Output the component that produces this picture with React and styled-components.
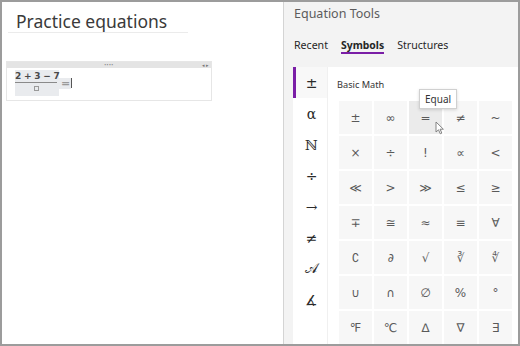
import React from 'react';
import styled, { createGlobalStyle } from 'styled-components';

const GlobalStyle = createGlobalStyle`
  html, body {
    margin: 0;
    padding: 0;
    background: #ffffff;
  }
  * {
    box-sizing: border-box;
  }
`;

const Frame = styled.div`
  width: 520px;
  height: 346px;
  border: 2px solid #9c9c9c;
  display: flex;
  overflow: hidden;
  font-family: 'Noto Sans', 'Open Sans', sans-serif;
`;

const Page = styled.div`
  width: 281px;
  background: #ffffff;
  padding-top: 8px;
`;

const PageTitle = styled.div`
  margin-left: 6px;
  width: 180px;
  padding-left: 8px;
  height: 23px;
  border-bottom: 1px solid #ebebeb;
  font-size: 17.5px;
  line-height: 22px;
  color: #3a3a3a;
`;

const EquationBox = styled.div`
  margin: 28px 0 0 4px;
  width: 206px;
  height: 40px;
  border: 1px solid #e6e6e6;
`;

const HandleBar = styled.div`
  height: 6px;
  background: #e4e4e4;
  position: relative;
  display: flex;
  justify-content: center;
  align-items: center;
  font-size: 5px;
  line-height: 6px;
  color: #888888;
  letter-spacing: 0.5px;
`;

const HandleArrows = styled.span`
  position: absolute;
  right: 2px;
  top: 0;
  font-size: 5px;
  color: #777777;
`;

const EquationLine = styled.div`
  display: flex;
  align-items: center;
  padding: 2px 0 0 8px;
`;

const Fraction = styled.div`
  display: flex;
  flex-direction: column;
  align-items: stretch;
  background: #e9ebee;
  padding: 1px 2px 2px 0;
  width: 44px;
`;

const Numerator = styled.div`
  font-family: 'DejaVu Sans', sans-serif;
  font-size: 9px;
  font-weight: bold;
  color: #4a4a4a;
  line-height: 10px;
  padding-bottom: 1px;
  border-bottom: 1px solid #8a8a8a;
  white-space: nowrap;
  letter-spacing: -0.2px;
`;

const Denominator = styled.div`
  display: flex;
  justify-content: center;
  padding-top: 2px;
  height: 11px;
`;

const Placeholder = styled.span`
  width: 5px;
  height: 5px;
  border: 1px solid #9a9a9a;
  margin-top: 1px;
`;

const EqualSign = styled.span`
  font-family: 'DejaVu Sans', sans-serif;
  font-size: 11px;
  font-weight: bold;
  color: #9a9a9a;
  background: #e9ebee;
  padding: 0 1px 0 2px;
  line-height: 11px;
`;

const Caret = styled.span`
  width: 1px;
  height: 10px;
  background: #555555;
`;

const Pane = styled.div`
  flex: 1;
  background: #f3f3f3;
  border-left: 1px solid #d4d4d4;
  display: flex;
  flex-direction: column;
  position: relative;
`;

const PaneTitle = styled.div`
  padding: 2px 0 0 10px;
  font-size: 12.5px;
  line-height: 20px;
  color: #5c5c5c;
`;

const Tabs = styled.div`
  display: flex;
  gap: 13px;
  padding: 13px 0 0 10px;
  height: 65px;
`;

const Tab = styled.div`
  font-size: ${p => (p.$active ? '10.4px' : '10.6px')};
  line-height: 16px;
  color: #262626;
  font-weight: ${p => (p.$active ? 700 : 400)};
  height: 17px;
  border-bottom: 2px solid ${p => (p.$active ? '#7a1ea6' : 'transparent')};
`;

const Body = styled.div`
  flex: 1;
  margin-left: 9px;
  background: #ffffff;
  display: flex;
`;

const Sidebar = styled.div`
  width: 35px;
  border-right: 1px solid #f0f0f0;
  display: flex;
  flex-direction: column;
`;

const SideItem = styled.div`
  height: 31px;
  display: flex;
  align-items: center;
  justify-content: center;
  font-family: 'DejaVu Serif', 'Liberation Serif', serif;
  font-size: 14px;
  color: #2a2a2a;
  background: ${p => (p.$active ? '#f8f8f8' : 'transparent')};
  border-left: 3px solid ${p => (p.$active ? '#7a1ea6' : 'transparent')};
`;

const Main = styled.div`
  flex: 1;
  padding: 11px 0 0 11px;
`;

const SectionLabel = styled.div`
  font-size: 9.2px;
  line-height: 14px;
  color: #333333;
  margin: 0 0 9px -2px;
`;

const SymbolGrid = styled.div`
  display: grid;
  grid-template-columns: repeat(5, 33px);
  grid-auto-rows: 33px;
  gap: 2px;
`;

const SymbolCell = styled.div`
  background: ${p => (p.$hover ? '#ebebeb' : '#f7f7f7')};
  display: flex;
  align-items: center;
  justify-content: center;
  font-family: 'DejaVu Sans', 'Liberation Serif', serif;
  font-size: 12px;
  color: #5a5a5a;
`;

const Tooltip = styled.div`
  position: absolute;
  left: 135px;
  top: 87px;
  padding: 0 5px;
  height: 20px;
  line-height: 18px;
  font-size: 10px;
  color: #333333;
  background: #ffffff;
  border: 1px solid #d0d0d0;
  box-shadow: 0 1px 3px rgba(0, 0, 0, 0.15);
`;

const Pointer = styled.svg`
  position: absolute;
  left: 151px;
  top: 119px;
`;

const sideIcons = ['±', 'α', 'ℕ', '÷', '→', '≠', '𝒜', '∡'];

const symbols = [
  '±', '∞', '=', '≠', '~',
  '×', '÷', '!', '∝', '<',
  '≪', '>', '≫', '≤', '≥',
  '∓', '≅', '≈', '≡', '∀',
  '∁', '∂', '√', '∛', '∜',
  '∪', '∩', '∅', '%', '°',
  '℉', '℃', '∆', '∇', '∃'
];

const App = () => (
  <>
    <GlobalStyle />
    <Frame>
      <Page>
        <PageTitle>Practice equations</PageTitle>
        <EquationBox>
          <HandleBar>
            ••••
            <HandleArrows>◂▸</HandleArrows>
          </HandleBar>
          <EquationLine>
            <Fraction>
              <Numerator>2 + 3  − 7</Numerator>
              <Denominator>
                <Placeholder />
              </Denominator>
            </Fraction>
            <EqualSign>=</EqualSign>
            <Caret />
          </EquationLine>
        </EquationBox>
      </Page>
      <Pane>
        <PaneTitle>Equation Tools</PaneTitle>
        <Tabs>
          <Tab>Recent</Tab>
          <Tab $active>Symbols</Tab>
          <Tab>Structures</Tab>
        </Tabs>
        <Body>
          <Sidebar>
            {sideIcons.map((s, i) => (
              <SideItem key={i} $active={i === 0}>{s}</SideItem>
            ))}
          </Sidebar>
          <Main>
            <SectionLabel>Basic Math</SectionLabel>
            <SymbolGrid>
              {symbols.map((s, i) => (
                <SymbolCell key={i} $hover={i === 2}>{s}</SymbolCell>
              ))}
            </SymbolGrid>
          </Main>
        </Body>
        <Tooltip>Equal</Tooltip>
        <Pointer width="10" height="14" viewBox="0 0 10 14">
          <path d="M1 1 L1 11 L3.5 8.8 L5.3 12.8 L6.8 12.1 L5 8.2 L8.4 8.2 Z" fill="#ffffff" stroke="#777777" strokeWidth="0.9" strokeLinejoin="round" />
        </Pointer>
      </Pane>
    </Frame>
  </>
);

export default App;
